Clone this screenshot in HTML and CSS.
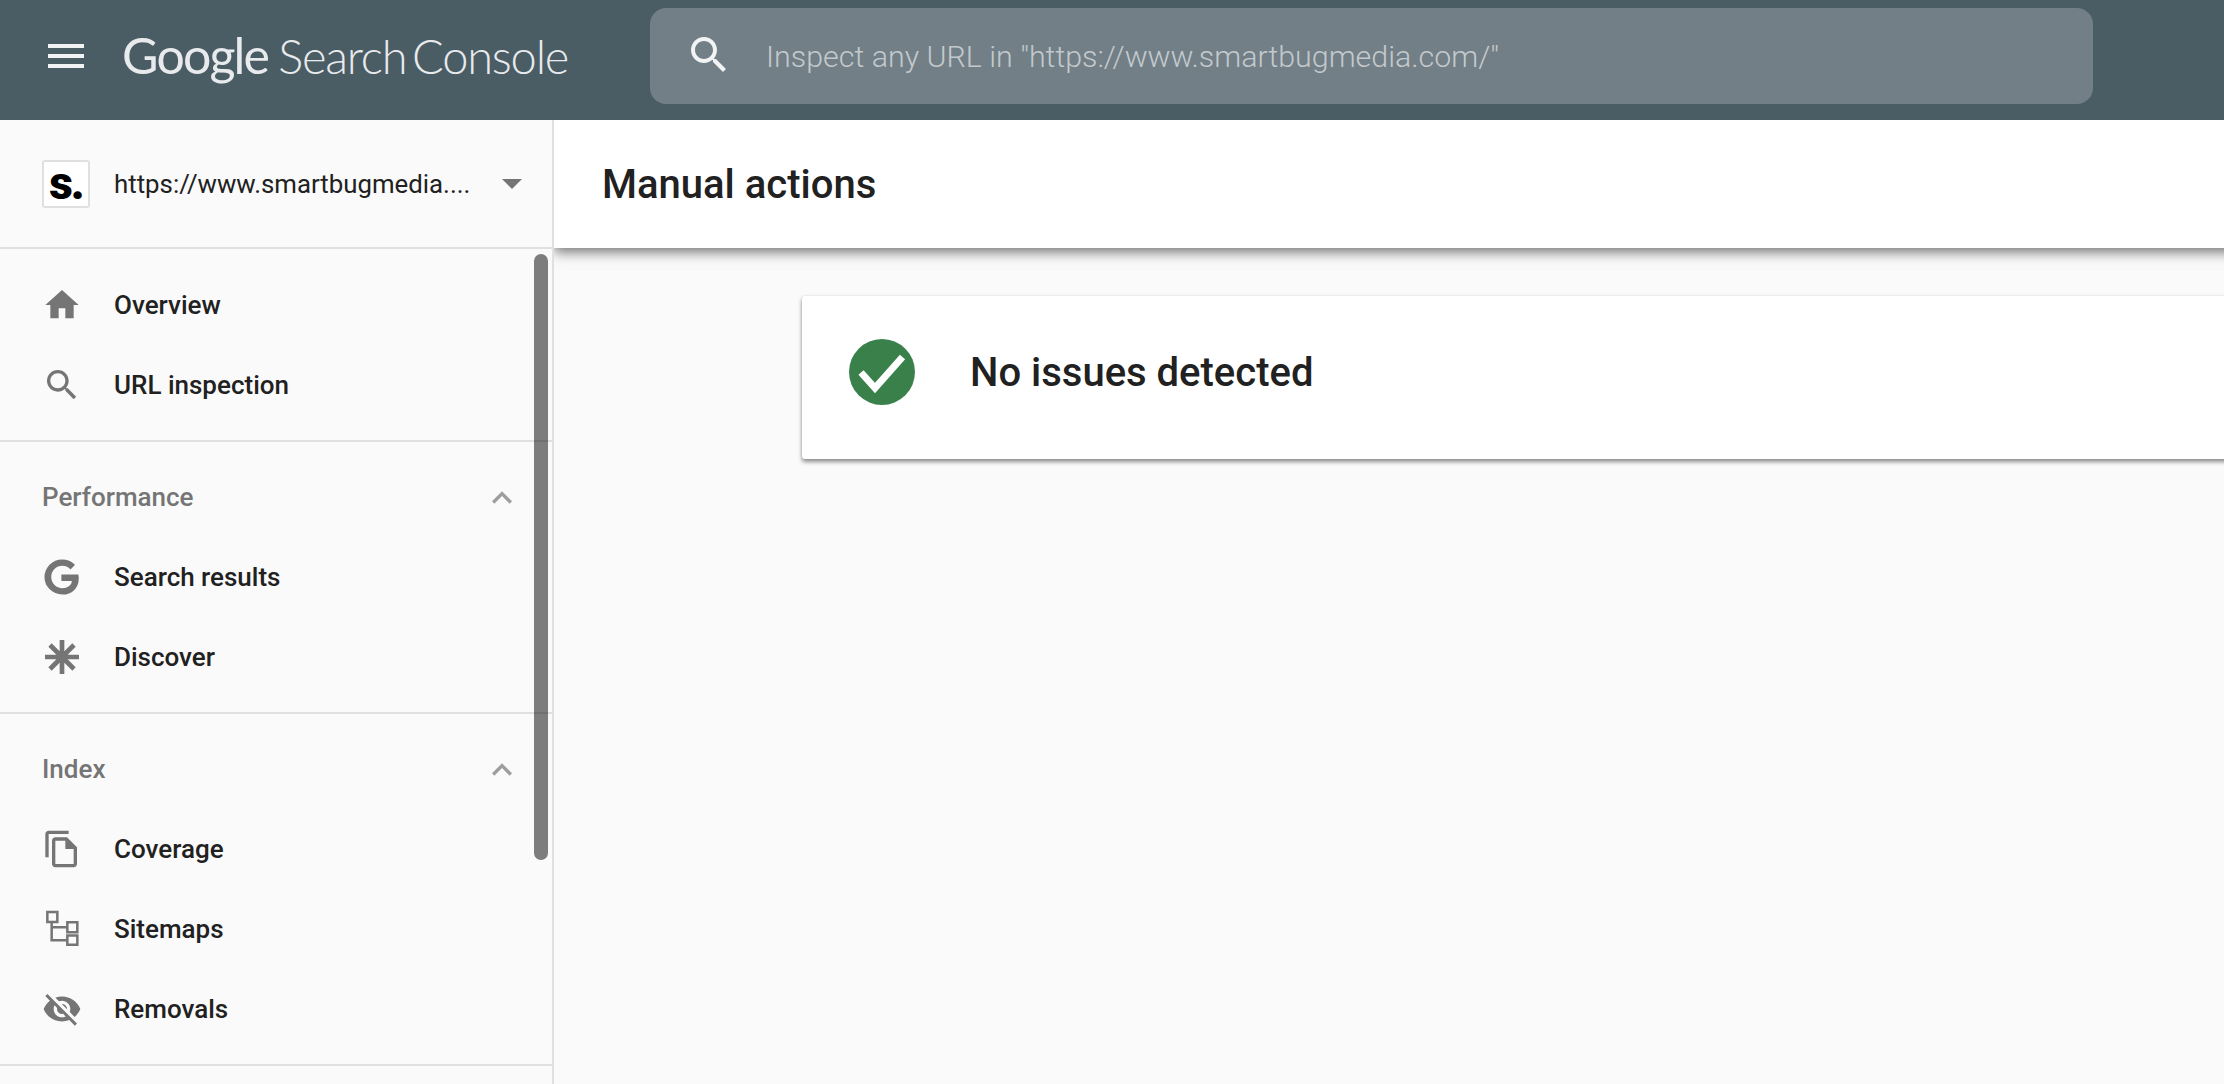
FILE: index.html
```html
<!DOCTYPE html>
<html lang="en">
<head>
<meta charset="utf-8">
<title>Manual actions - Google Search Console</title>
<link rel="stylesheet" href="styles.css">
</head>
<body>
<header class="topbar">
  <button class="menu" aria-label="Menu"><span></span><span></span><span></span></button>
  <div class="logo"><span class="logo-google">Google</span><span class="logo-product">Search Console</span></div>
  <div class="search">
    <svg class="search-icon" viewBox="0 0 24 24"><path d="M15.5 14h-.79l-.28-.27C15.41 12.59 16 11.11 16 9.5 16 5.91 13.09 3 9.5 3S3 5.91 3 9.5 5.91 16 9.5 16c1.61 0 3.09-.59 4.23-1.57l.27.28v.79l5 4.99L20.49 19l-4.99-5zm-6 0C7.01 14 5 11.99 5 9.5S7.01 5 9.5 5 14 7.01 14 9.5 11.99 14 9.5 14z"/></svg>
    <span class="search-text">Inspect any URL in "https://www.smartbugmedia.com/"</span>
  </div>
</header>
<div class="layout">
  <aside class="sidebar">
    <div class="property">
      <div class="favicon">s.</div>
      <span class="property-url">https://www.smartbugmedia....</span>
      <span class="caret"></span>
    </div>
    <nav class="section section-first">
      <a class="row"><svg class="icon" viewBox="0 0 24 24"><path d="M10 20v-6h4v6h5v-8h3L12 3 2 12h3v8z"/></svg>Overview</a>
      <a class="row"><svg class="icon" viewBox="0 0 24 24"><path d="M15.5 14h-.79l-.28-.27C15.41 12.59 16 11.11 16 9.5 16 5.91 13.09 3 9.5 3S3 5.91 3 9.5 5.91 16 9.5 16c1.61 0 3.09-.59 4.23-1.57l.27.28v.79l5 4.99L20.49 19l-4.99-5zm-6 0C7.01 14 5 11.99 5 9.5S7.01 5 9.5 5 14 7.01 14 9.5 11.99 14 9.5 14z"/></svg>URL inspection</a>
    </nav>
    <nav class="section">
      <div class="section-head"><span>Performance</span><svg class="chevron" viewBox="0 0 24 24"><path d="M12 8l-6 6 1.41 1.41L12 10.83l4.59 4.58L18 14z"/></svg></div>
      <a class="row"><svg class="icon" viewBox="0 0 24 24"><path class="heavy" d="M21.35 11.1h-9.17v2.73h6.51c-.33 3.81-3.5 5.44-6.5 5.44C8.36 19.27 5 16.25 5 12c0-4.1 3.2-7.27 7.2-7.27 3.09 0 4.9 1.97 4.9 1.97L19 4.72S16.56 2 12.1 2C6.42 2 2.03 6.8 2.03 12c0 5.05 4.13 10 10.22 10 5.35 0 9.25-3.67 9.25-9.09 0-1.15-.15-1.81-.15-1.81z"/></svg>Search results</a>
      <a class="row"><svg class="icon" viewBox="0 0 24 24"><path class="stroke" stroke-width="2.8" d="M12 1.8v20.4M1.8 12h20.4M4.8 4.8l14.4 14.4M19.2 4.8L4.8 19.2"/></svg>Discover</a>
    </nav>
    <nav class="section">
      <div class="section-head"><span>Index</span><svg class="chevron" viewBox="0 0 24 24"><path d="M12 8l-6 6 1.41 1.41L12 10.83l4.59 4.58L18 14z"/></svg></div>
      <a class="row"><svg class="icon" viewBox="0 0 24 24"><path d="M16 1H4c-1.1 0-2 .9-2 2v14h2V3h12V1zm-1 4H8c-1.1 0-1.99.9-1.99 2L6 21c0 1.1.89 2 1.99 2H19c1.1 0 2-.9 2-2V11l-6-6zM8 21V7h6v5h5v9H8z"/></svg>Coverage</a>
      <a class="row"><svg class="icon" viewBox="0 0 24 24"><path class="stroke" stroke-width="1.5" d="M3.2 1.8h6v6h-6zM15.2 8h6v6h-6zM15.2 15.9h6v5.6h-6zM5.8 7.8v10.9h9.4M5.8 11h9.4"/></svg>Sitemaps</a>
      <a class="row"><svg class="icon" viewBox="0 0 24 24"><path d="M12 7c2.76 0 5 2.24 5 5 0 .65-.13 1.26-.36 1.83l2.92 2.92c1.51-1.26 2.7-2.89 3.43-4.75-1.73-4.39-6-7.5-11-7.5-1.4 0-2.74.25-3.98.7l2.16 2.16C10.74 7.13 11.35 7 12 7zM2 4.27l2.28 2.28.46.46C3.08 8.3 1.78 10.02 1 12c1.73 4.39 6 7.5 11 7.5 1.55 0 3.03-.3 4.38-.84l.42.42L19.73 22 21 20.73 3.27 3 2 4.27zM7.53 9.8l1.55 1.55c-.05.21-.08.43-.08.65 0 1.66 1.34 3 3 3 .22 0 .44-.03.65-.08l1.55 1.55c-.67.33-1.41.53-2.2.53-2.76 0-5-2.24-5-5 0-.79.2-1.53.53-2.2zm4.31-.78l3.15 3.15.02-.16c0-1.66-1.34-3-3-3l-.17.01z"/></svg>Removals</a>
    </nav>
    <div class="scroll-thumb"></div>
  </aside>
  <main class="main">
    <div class="titlebar"><h1 class="title">Manual actions</h1></div>
    <section class="card">
      <svg class="status" viewBox="0 0 66 66"><circle cx="33" cy="33" r="33" fill="#3a804b"/><path d="M12 33.5L26 49 53.5 18" fill="none" stroke="#fff" stroke-width="7"/></svg>
      <span class="card-text">No issues detected</span>
    </section>
  </main>
</div>
</body>
</html>
```
FILE: styles.css
```css
* { box-sizing: border-box; }
html, body { margin: 0; height: 100%; }
body {
  display: flex;
  flex-direction: column;
  height: 1084px;
  overflow: hidden;
  background: #fafafa;
  font-family: Roboto, "Liberation Sans", sans-serif;
  color: #212121;
}
.topbar {
  flex: none;
  height: 120px;
  background: #4a5c64;
  display: flex;
  align-items: center;
}
.menu {
  flex: none;
  width: 36px;
  height: 24px;
  margin: 0 0 8px 48px;
  padding: 0;
  border: 0;
  background: none;
  display: flex;
  flex-direction: column;
  justify-content: space-between;
}
.menu span { display: block; height: 4px; background: #f1f3f4; }
.logo {
  flex: none;
  width: 566px;
  padding-left: 38px;
  margin-bottom: 10px;
  color: #e8eaed;
  font-family: Lato, sans-serif;
  font-weight: 400;
  white-space: nowrap;
  display: flex;
  align-items: baseline;
}
.logo-google { font-size: 50px; letter-spacing: -1.8px; margin-right: 10px; }
.logo-product { font-size: 47px; font-weight: 300; letter-spacing: -1.2px; word-spacing: -6px; }
.search {
  flex: none;
  width: 1443px;
  height: 96px;
  margin-bottom: 8px;
  background: #727f87;
  border-radius: 16px;
  display: flex;
  align-items: center;
  padding-left: 35px;
  gap: 37px;
}
.search-icon { width: 48px; height: 48px; fill: #f1f3f4; margin-top: -2px; flex: none; margin-right: -4px; }
.search-text { font-size: 30.4px; font-weight: 300; color: #c3c9cc; white-space: nowrap; }
.layout { flex: 1; display: flex; min-height: 0; }
.sidebar {
  flex: none;
  position: relative;
  width: 554px;
  background: #fafafa;
  border-right: 2px solid #e0e0e0;
}
.property {
  height: 129px;
  border-bottom: 2px solid #e0e0e0;
  display: flex;
  align-items: center;
  padding-left: 42px;
}
.favicon {
  flex: none;
  width: 48px;
  height: 48px;
  background: #fff;
  border: 2px solid #e0e0e0;
  border-radius: 3px;
  color: #000;
  font-family: Roboto, sans-serif;
  font-weight: 900;
  font-size: 46px;
  line-height: 42px;
  text-align: center;
  letter-spacing: -2px;
  white-space: nowrap;
}
.property-url { margin-left: 24px; font-size: 25.8px; width: 388px; white-space: nowrap; }
.caret {
  width: 0;
  height: 0;
  border-left: 10px solid transparent;
  border-right: 10px solid transparent;
  border-top: 10px solid #757575;
}
.section {
  border-bottom: 2px solid #e0e0e0;
  padding: 15px 0;
}
.section-first { padding-top: 16px; }
.section-head {
  height: 80px;
  padding-left: 42px;
  padding-right: 30px;
  display: flex;
  align-items: center;
  justify-content: space-between;
  font-size: 26px;
  font-weight: 500;
  color: #757575;
}
.chevron { width: 40px; height: 40px; fill: #9e9e9e; margin-top: 2px; }
.row {
  height: 80px;
  padding-left: 42px;
  display: flex;
  align-items: center;
  gap: 32px;
  font-size: 26px;
  font-weight: 500;
  color: #212121;
}
.icon { width: 40px; height: 40px; fill: #757575; flex: none; }
.stroke { fill: none; stroke: #757575; }
.heavy { stroke: #757575; stroke-width: 1.1; }
.scroll-thumb {
  position: absolute;
  left: 534px;
  top: 134px;
  width: 14px;
  height: 606px;
  border-radius: 7px;
  background: rgba(0, 0, 0, 0.5);
}
.main { flex: 1; min-width: 0; overflow: hidden; background: #fafafa; }
.titlebar {
  height: 128px;
  margin-right: -20px;
  background: #fff;
  box-shadow: 0 4px 12px rgba(0, 0, 0, 0.55);
  padding-left: 48px;
  display: flex;
  align-items: center;
  position: relative;
}
.title { margin: 0; font-size: 40px; font-weight: 500; color: #212121; }
.card {
  margin: 48px -10px 0 248px;
  height: 163px;
  background: #fff;
  border-radius: 3px;
  box-shadow: 0 3px 4px rgba(0, 0, 0, 0.42), 0 0 3px rgba(0, 0, 0, 0.1);
  display: flex;
  align-items: center;
  padding: 0 0 10px 47px;
  gap: 55px;
}
.status { width: 66px; height: 66px; flex: none; margin-top: -2px; }
.card-text { font-size: 40px; font-weight: 500; color: #212121; }
```
